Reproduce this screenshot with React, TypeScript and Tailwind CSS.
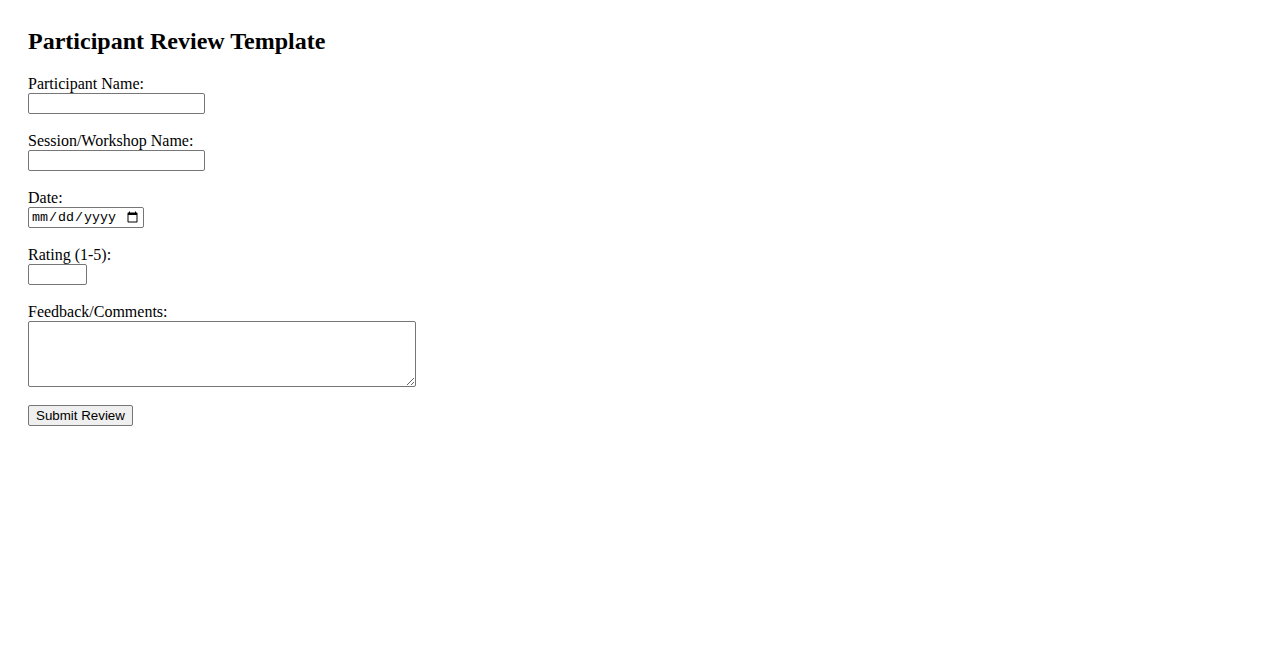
export default function App() {
  const fields = [
    { label: 'Participant Name:', type: 'text', w: 'w-[177px]' },
    { label: 'Session/Workshop Name:', type: 'text', w: 'w-[177px]' },
    { label: 'Date:', type: 'date', w: 'w-[116px]' },
    { label: 'Rating (1-5):', type: 'number', w: 'w-[59px]' },
  ];

  return (
    <div className="min-h-[650px] bg-white px-[28px] pt-[28px] text-black font-['Liberation_Serif',serif] text-[16px]">
      <h2 className="text-[24px] font-bold leading-[27px] mb-[20px]">Participant Review Template</h2>
      <form onSubmit={(e) => e.preventDefault()}>
        {fields.map((f) => (
          <div key={f.label} className="mb-[18px]">
            <label className="block leading-[18px]">{f.label}</label>
            <input
              type={f.type}
              className={`block ${f.w} h-[21px] border border-[#767676] rounded-[2px] px-[2px] text-[13.33px] ${
                f.type === 'date' ? "font-['Liberation_Mono',monospace] text-[12px]" : "font-['Liberation_Sans',Arial,sans-serif]"
              }`}
            />
          </div>
        ))}
        <div className="mb-[18px]">
          <label className="block leading-[18px]">Feedback/Comments:</label>
          <textarea className="block w-[388px] h-[66px] border border-[#767676] rounded-[2px] p-[2px] text-[13.33px] font-['Liberation_Mono',monospace]" />
        </div>
        <button
          type="submit"
          className="block h-[21px] px-[7px] bg-[#efefef] border border-[#767676] rounded-[2px] text-[13.33px] leading-[17px] font-['Liberation_Sans',Arial,sans-serif]"
        >
          Submit Review
        </button>
      </form>
    </div>
  );
}
